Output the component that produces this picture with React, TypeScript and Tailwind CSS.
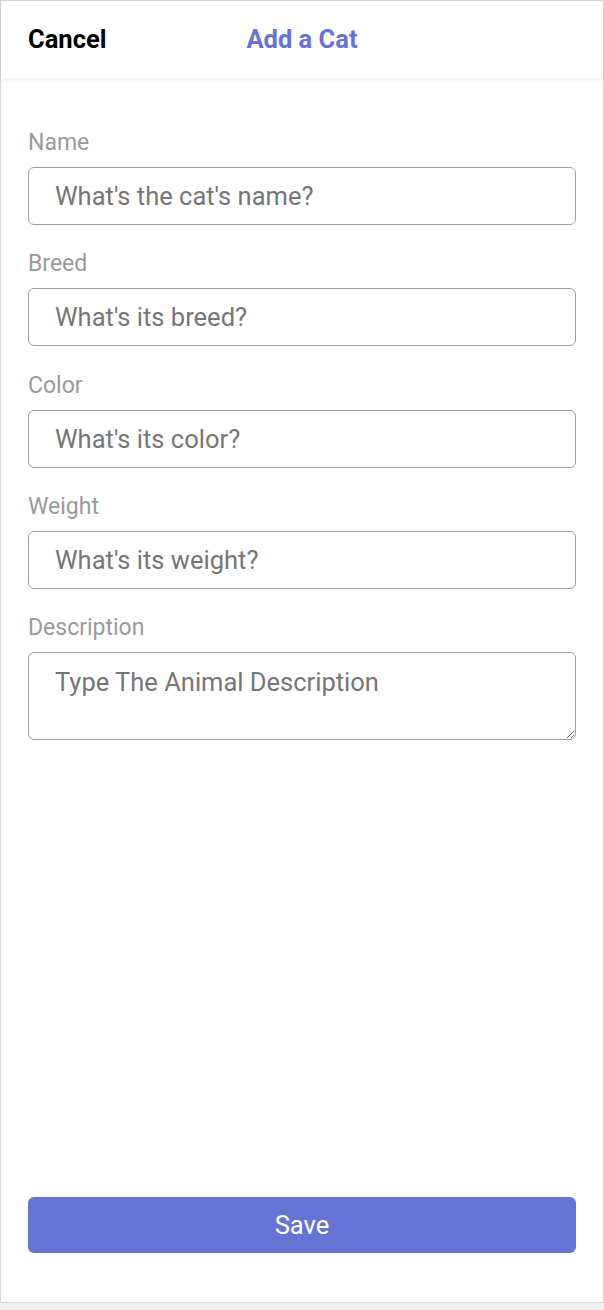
import React from 'react';

const fields = [
  { label: 'Name', placeholder: "What's the cat's name?" },
  { label: 'Breed', placeholder: "What's its breed?" },
  { label: 'Color', placeholder: "What's its color?" },
  { label: 'Weight', placeholder: "What's its weight?" },
];

export default function App() {
  return (
    <div className="min-h-[1310px] bg-[#f0f0f0] font-['Roboto',sans-serif]">
      <div className="flex min-h-[1303px] flex-col border border-[#d6d6d6] bg-white">
        <header className="grid h-[77px] grid-cols-3 items-center px-[27px] shadow-[0_2px_4px_rgba(0,0,0,0.08)]">
          <button className="text-left text-[25.5px] font-bold text-black">Cancel</button>
          <h1 className="text-center text-[25.5px] font-bold text-[#6672d6]">Add a Cat</h1>
          <div />
        </header>

        <form className="flex flex-1 flex-col px-[27px] pt-[53px]">
          <div className="flex flex-col gap-[27.25px]">
            {fields.map((f) => (
              <div key={f.label} className="flex flex-col gap-3">
                <label className="h-6 text-[23px] leading-6 text-[#9a9a9a]">{f.label}</label>
                <input
                  className="h-[58px] rounded-md border border-[#9e9e9e] px-[26px] text-[25.5px] text-[#555] outline-none placeholder:text-[#767676]"
                  placeholder={f.placeholder}
                />
              </div>
            ))}
            <div className="flex flex-col gap-3">
              <label className="h-6 text-[23px] leading-6 text-[#9a9a9a]">Description</label>
              <textarea
                className="h-[88px] rounded-md border border-[#9e9e9e] px-[26px] pt-[13px] text-[25.5px] leading-8 text-[#555] outline-none placeholder:text-[#767676]"
                placeholder="Type The Animal Description"
              />
            </div>
          </div>

          <button
            type="button"
            className="mt-auto mb-[49px] h-14 rounded-md bg-[#6573d4] text-[25.5px] text-white"
          >
            Save
          </button>
        </form>
      </div>
    </div>
  );
}
